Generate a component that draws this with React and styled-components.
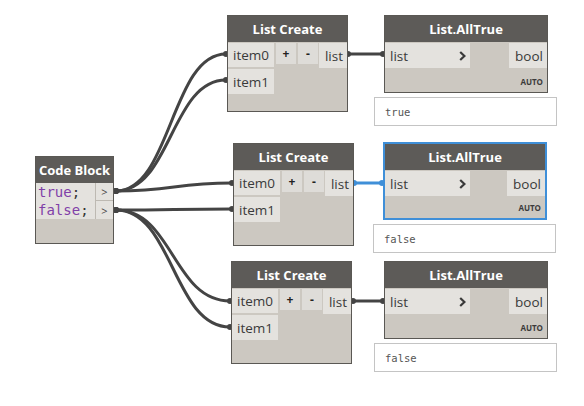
import React from 'react'
import styled, { createGlobalStyle } from 'styled-components'

const GlobalStyle = createGlobalStyle`
  html, body {
    margin: 0;
    padding: 0;
    background: #ffffff;
  }
  body {
    font-family: "Open Sans", "Noto Sans", sans-serif;
  }
`

const Canvas = styled.div`
  position: relative;
  width: 584px;
  height: 406px;
  overflow: hidden;
  background: #ffffff;
`

const Wires = styled.svg`
  position: absolute;
  left: 0;
  top: 0;
`

const Node = styled.div`
  position: absolute;
  box-sizing: border-box;
  display: flex;
  flex-direction: column;
  background: #ccc8c1;
  border: ${(p) => (p.selected ? '2px solid #3f8fd8' : '1px solid #5a5854')};
`

const Header = styled.div`
  height: 26px;
  flex: 0 0 auto;
  display: flex;
  align-items: center;
  justify-content: center;
  background: #5d5b58;
  color: #ffffff;
  font-weight: 700;
  font-size: 13px;
`

const Body = styled.div`
  display: flex;
  align-items: flex-start;
  padding-top: 1px;
`

const Column = styled.div`
  display: flex;
  flex-direction: column;
  gap: 2px;
`

const Port = styled.div`
  box-sizing: border-box;
  width: ${(p) => p.w}px;
  height: ${(p) => p.h || 24}px;
  display: flex;
  align-items: center;
  justify-content: ${(p) => (p.right ? 'flex-end' : 'space-between')};
  padding: 0 4px 0 5px;
  background: #e4e2de;
  color: #3a3a3a;
  font-size: 13.5px;
`

const Buttons = styled.div`
  display: flex;
  gap: 2px;
  margin-left: 2px;
`

const SmallButton = styled.div`
  width: 20px;
  height: 21px;
  display: flex;
  align-items: center;
  justify-content: center;
  background: #dedcd8;
  color: #222;
  font-size: 12px;
  font-weight: 700;
`

const Spacer = styled.div`
  flex: 1;
`

const Auto = styled.div`
  margin-top: auto;
  padding: 0 4px 5px 0;
  text-align: right;
  font-size: 8px;
  font-weight: 700;
  color: #3b3b3b;
`

const Watch = styled.div`
  position: absolute;
  box-sizing: border-box;
  width: 183px;
  height: 29px;
  display: flex;
  align-items: center;
  padding-left: 10px;
  background: #ffffff;
  border: 1px solid #c4c4c4;
  font-family: "DejaVu Sans Mono", "Liberation Mono", monospace;
  font-size: 10.5px;
  color: #555;
`

const CodeLines = styled.div`
  display: flex;
  flex-direction: column;
  background: #e4e2de;
  flex: 1;
`

const CodeLine = styled.div`
  height: 18px;
  display: flex;
  align-items: center;
  padding-left: 2px;
  font-family: "DejaVu Sans Mono", "Liberation Mono", monospace;
  font-size: 14px;
  color: #333;
`

const Keyword = styled.span`
  color: #8040a8;
`

const OutArrow = styled.div`
  box-sizing: border-box;
  width: 18px;
  height: 18px;
  display: flex;
  align-items: center;
  justify-content: center;
  background: #e4e2de;
  border-left: 1px solid #bdb9b2;
  border-bottom: ${(p) => (p.last ? 'none' : '1px solid #bdb9b2')};
  color: #444;
  font-size: 11px;
`

const Chevron = () => (
  <svg width="7" height="10" viewBox="0 0 7 10">
    <path d="M1.2 1 L5.4 5 L1.2 9" stroke="#3a3a3a" strokeWidth="2.2" fill="none" />
  </svg>
)

const ListCreate = ({ x, y, h }) => (
  <Node style={{ left: x, top: y, width: 121, height: h }}>
    <Header>List Create</Header>
    <Body>
      <Column>
        <Port w={46}>item0</Port>
        <Port w={46} h={25}>item1</Port>
      </Column>
      <Buttons>
        <SmallButton>+</SmallButton>
        <SmallButton>-</SmallButton>
      </Buttons>
      <Spacer />
      <Port w={28} h={25} right>list</Port>
    </Body>
  </Node>
)

const AllTrue = ({ x, y, selected, value }) => (
  <>
    <Node selected={selected} style={{ left: x, top: y, width: 164, height: 78 }}>
      <Header>List.AllTrue</Header>
      <Body>
        <Port w={85} h={25}>
          list <Chevron />
        </Port>
        <Spacer />
        <Port w={38} h={25} right>bool</Port>
      </Body>
      <Auto>AUTO</Auto>
    </Node>
    <Watch style={{ left: x - 10, top: y + 82 }}>{value}</Watch>
  </>
)

const CodeBlock = ({ x, y }) => (
  <Node style={{ left: x, top: y, width: 79, height: 88 }}>
    <Header>Code Block</Header>
    <Body style={{ paddingTop: 0 }}>
      <CodeLines>
        <CodeLine><Keyword>true</Keyword>;</CodeLine>
        <CodeLine><Keyword>false</Keyword>;</CodeLine>
      </CodeLines>
      <Column style={{ gap: 0 }}>
        <OutArrow>&gt;</OutArrow>
        <OutArrow last>&gt;</OutArrow>
      </Column>
    </Body>
  </Node>
)

const curve = (x1, y1, x2, y2) => {
  const dx = Math.max(30, (x2 - x1) * 0.5)
  return `M${x1},${y1} C${x1 + dx},${y1} ${x2 - dx},${y2} ${x2},${y2}`
}

const wires = [
  [116, 191, 226, 54],
  [116, 191, 226, 80],
  [116, 191, 232, 183],
  [116, 210, 232, 209],
  [116, 210, 230, 301],
  [116, 210, 230, 327],
  [348, 54, 383, 54],
  [354, 183, 382, 183, true],
  [353, 301, 383, 301],
]

const App = () => (
  <Canvas>
    <GlobalStyle />
    <Wires width="584" height="406">
      {wires.map(([x1, y1, x2, y2, blue], i) => (
        <g key={i} fill={blue ? '#3f8fd8' : '#444444'}>
          <path d={curve(x1, y1, x2, y2)} stroke={blue ? '#3f8fd8' : '#444444'} strokeWidth="3" fill="none" />
          <circle cx={x1} cy={y1} r="3" />
          <circle cx={x2} cy={y2} r="3" />
        </g>
      ))}
    </Wires>
    <ListCreate x={227} y={15} h={97} />
    <ListCreate x={233} y={143} h={103} />
    <ListCreate x={231} y={261} h={103} />
    <AllTrue x={384} y={15} value="true" />
    <AllTrue x={383} y={142} selected value="false" />
    <AllTrue x={384} y={261} value="false" />
    <CodeBlock x={35} y={156} />
  </Canvas>
)

export default App
